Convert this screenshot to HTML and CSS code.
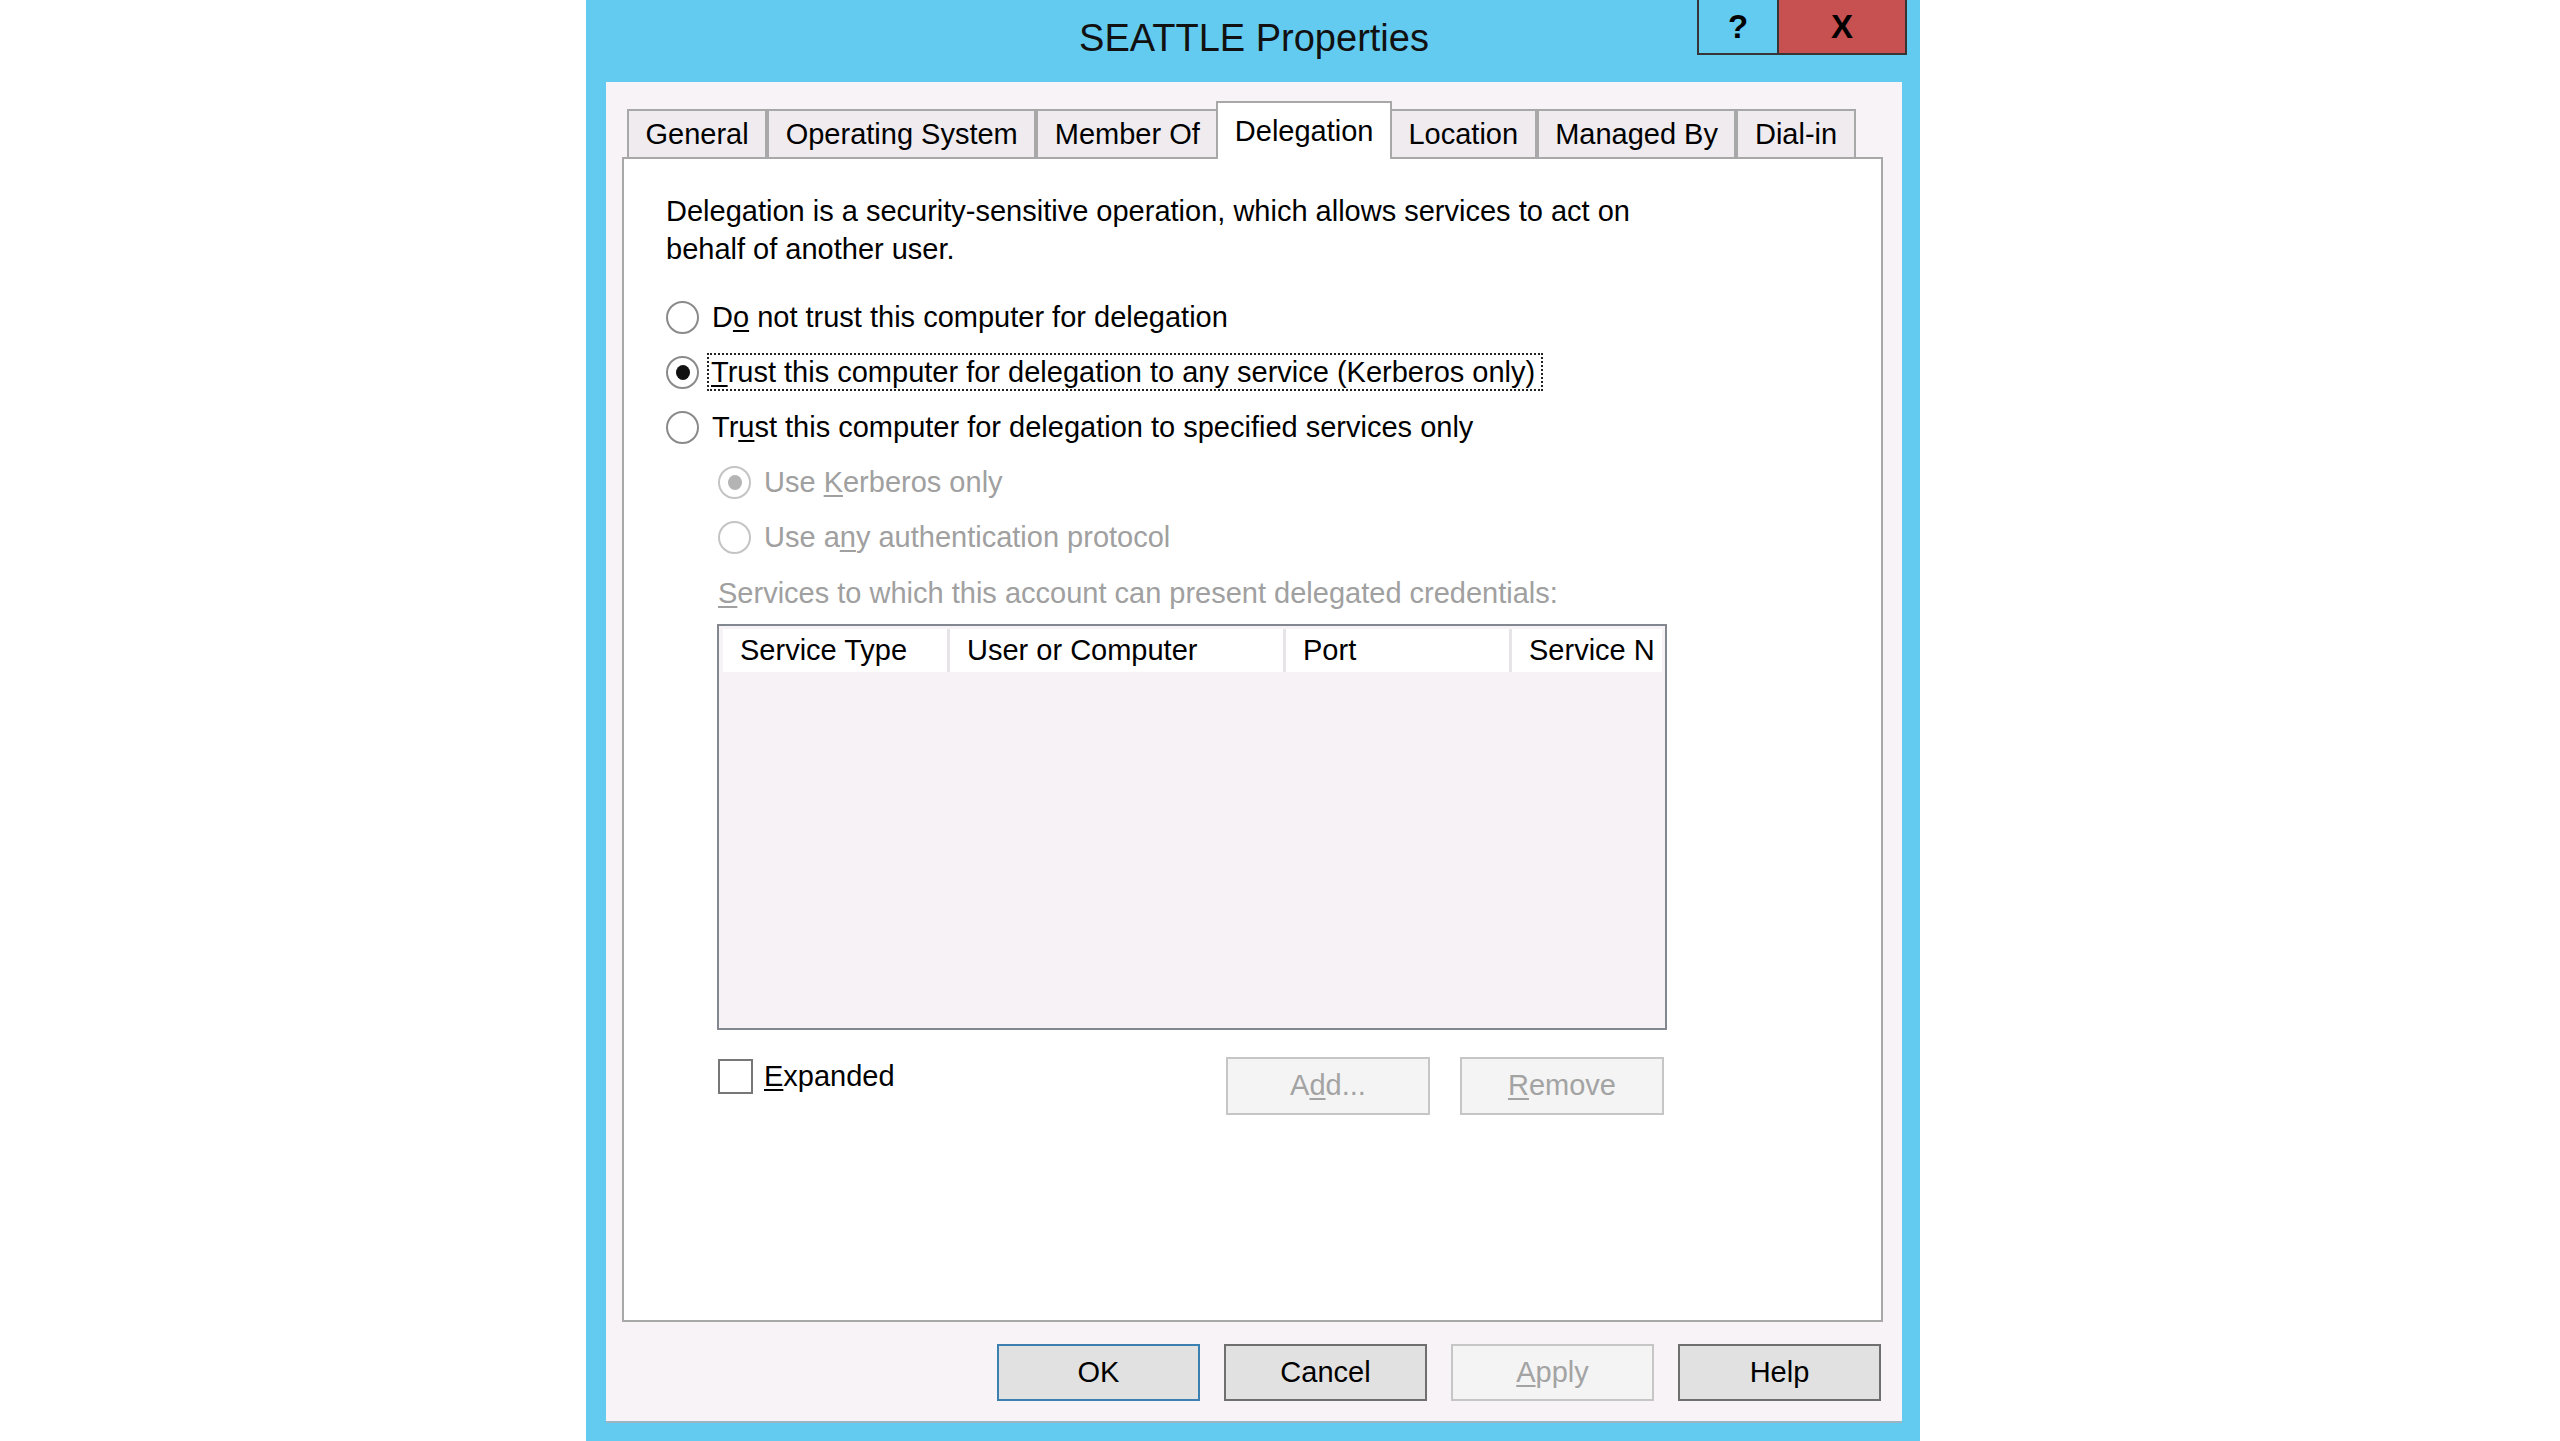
FILE: index.html
```html
<!DOCTYPE html>
<html>
<head>
    <title>SEATTLE Properties</title>
    <link rel="stylesheet" href="styles.css">
</head>
<body>
    <div class="window">
        <div class="titlebar">
            <span class="title">SEATTLE Properties</span>
            <div class="caption-buttons">
                <div class="cap-btn help">?</div>
                <div class="cap-btn close">X</div>
            </div>
        </div>

        <div class="dialog">
            <div class="tabs">
                <div class="tab">General</div>
                <div class="tab">Operating System</div>
                <div class="tab">Member Of</div>
                <div class="tab active">Delegation</div>
                <div class="tab">Location</div>
                <div class="tab">Managed By</div>
                <div class="tab">Dial-in</div>
            </div>

            <div class="tab-page">
                <p class="intro">Delegation is a security-sensitive operation, which allows services to act on behalf of another user.</p>

                <div class="option">
                    <span class="radio"></span>
                    <span>D<u>o</u> not trust this computer for delegation</span>
                </div>
                <div class="option">
                    <span class="radio checked"></span>
                    <span class="focus"><u>T</u>rust this computer for delegation to any service (Kerberos only)</span>
                </div>
                <div class="option">
                    <span class="radio"></span>
                    <span>Tr<u>u</u>st this computer for delegation to specified services only</span>
                </div>
                <div class="option sub disabled">
                    <span class="radio checked"></span>
                    <span>Use <u>K</u>erberos only</span>
                </div>
                <div class="option sub disabled">
                    <span class="radio"></span>
                    <span>Use a<u>n</u>y authentication protocol</span>
                </div>

                <div class="services-label"><u>S</u>ervices to which this account can present delegated credentials:</div>

                <div class="list">
                    <div class="list-header">
                        <div class="col">Service Type</div>
                        <div class="col">User or Computer</div>
                        <div class="col">Port</div>
                        <div class="col">Service N</div>
                    </div>
                </div>

                <div class="list-actions">
                    <div class="check-row">
                        <span class="checkbox"></span>
                        <span><u>E</u>xpanded</span>
                    </div>
                    <button class="btn disabled add">A<u>d</u>d...</button>
                    <button class="btn disabled"><u>R</u>emove</button>
                </div>
            </div>

            <div class="buttons">
                <button class="btn default">OK</button>
                <button class="btn">Cancel</button>
                <button class="btn disabled"><u>A</u>pply</button>
                <button class="btn">Help</button>
            </div>
        </div>
    </div>
</body>
</html>
```

FILE: styles.css
```css
body {
    margin: 0;
    background: #fff;
    font-family: "Liberation Sans", Arial, sans-serif;
    font-size: 29px;
    color: #000;
}
u {
    text-decoration-thickness: 2px;
    text-underline-offset: 3px;
}
.window {
    width: 1334px;
    height: 1441px;
    margin-left: 586px;
    padding: 0 18px 18px 20px;
    box-sizing: border-box;
    background: #63cbf0;
}
.titlebar {
    height: 82px;
    position: relative;
    display: flex;
    justify-content: center;
}
.title {
    font-size: 38px;
    line-height: 1;
    padding-top: 19px;
    color: #111;
}
.caption-buttons {
    position: absolute;
    top: 0;
    right: -5px;
    display: flex;
}
.cap-btn {
    height: 55px;
    box-sizing: border-box;
    border: 2px solid #353535;
    border-top: none;
    display: flex;
    align-items: center;
    justify-content: center;
    font-weight: bold;
    font-size: 33px;
}
.help {
    width: 80px;
    background: #63cbf0;
    border-right: none;
}
.close {
    width: 130px;
    background: #c75050;
}
.dialog {
    height: 1341px;
    box-sizing: border-box;
    padding: 19px 19px 0 16px;
    background: #f7f3f7;
    border-bottom: 2px solid #9bb5c2;
}
.tabs {
    display: flex;
    align-items: flex-end;
    margin-left: 5px;
}
.tab {
    height: 48px;
    box-sizing: border-box;
    padding: 0 16.5px;
    border: 2px solid #a8a8a8;
    border-bottom: none;
    background: #efebef;
    display: flex;
    align-items: center;
}
.tab.active {
    height: 58px;
    margin: 0 -2px -2px -2px;
    background: #fff;
    position: relative;
    z-index: 1;
}
.tab-page {
    height: 1165px;
    box-sizing: border-box;
    padding: 34px 40px 0 42px;
    background: #fff;
    border: 2px solid #a8a8a8;
}
.intro {
    margin: 0 0 29px 0;
    width: 1010px;
    line-height: 37.5px;
}
.option {
    display: flex;
    align-items: center;
    height: 40px;
    margin-top: 15px;
}
.option.sub {
    margin-left: 52px;
}
.disabled {
    color: #a0a0a0;
}
.radio {
    width: 33px;
    height: 33px;
    box-sizing: border-box;
    border: 2px solid #8a8a8a;
    border-radius: 50%;
    background: #fff;
    margin-right: 13px;
    flex-shrink: 0;
    display: flex;
    align-items: center;
    justify-content: center;
}
.radio.checked::after {
    content: "";
    width: 14px;
    height: 15px;
    border-radius: 50%;
    background: #111;
}
.disabled .radio {
    border-color: #c4c4c4;
}
.disabled .radio.checked::after {
    background: #b4b4b4;
}
.focus {
    border: 2px dotted #222;
    line-height: 34px;
    padding: 0 6px 0 2px;
    margin-left: -5px;
}
.services-label {
    margin: 18px 0 0 52px;
    line-height: 37.5px;
    color: #a0a0a0;
}
.list {
    margin: 11px 0 0 51px;
    width: 950px;
    height: 406px;
    box-sizing: border-box;
    border: 2px solid #838790;
    background: #f6f2f6;
    padding: 3px 3px 0 4px;
}
.list-header {
    display: grid;
    grid-template-columns: 224px 333px 223px 1fr;
    gap: 3px;
    height: 43px;
    background: #e6e4e6;
    overflow: hidden;
    white-space: nowrap;
}
.col {
    background: #fff;
    padding-left: 17px;
    line-height: 43px;
    overflow: hidden;
}
.list-actions {
    display: flex;
    align-items: flex-start;
    width: 946px;
    margin: 27px 0 0 52px;
}
.check-row {
    display: flex;
    align-items: center;
    margin-top: 2px;
}
.checkbox {
    width: 35px;
    height: 35px;
    box-sizing: border-box;
    border: 2px solid #777;
    background: #fff;
    margin-right: 11px;
}
.btn {
    width: 204px;
    height: 58px;
    box-sizing: border-box;
    border: 2px solid #6f6f6f;
    background: #e1e1e1;
    font: inherit;
    color: #000;
    padding: 0;
}
.btn.disabled {
    background: #f4f4f4;
    border-color: #c6c6c6;
    color: #a3a3a3;
}
.btn.default {
    border-color: #3c7fb1;
}
.add {
    margin-left: auto;
    margin-right: 30px;
}
.buttons {
    display: flex;
    justify-content: flex-end;
    gap: 24px;
    margin-top: 22px;
    padding-right: 2px;
}
.buttons .btn {
    width: 203px;
    height: 57px;
}
```
